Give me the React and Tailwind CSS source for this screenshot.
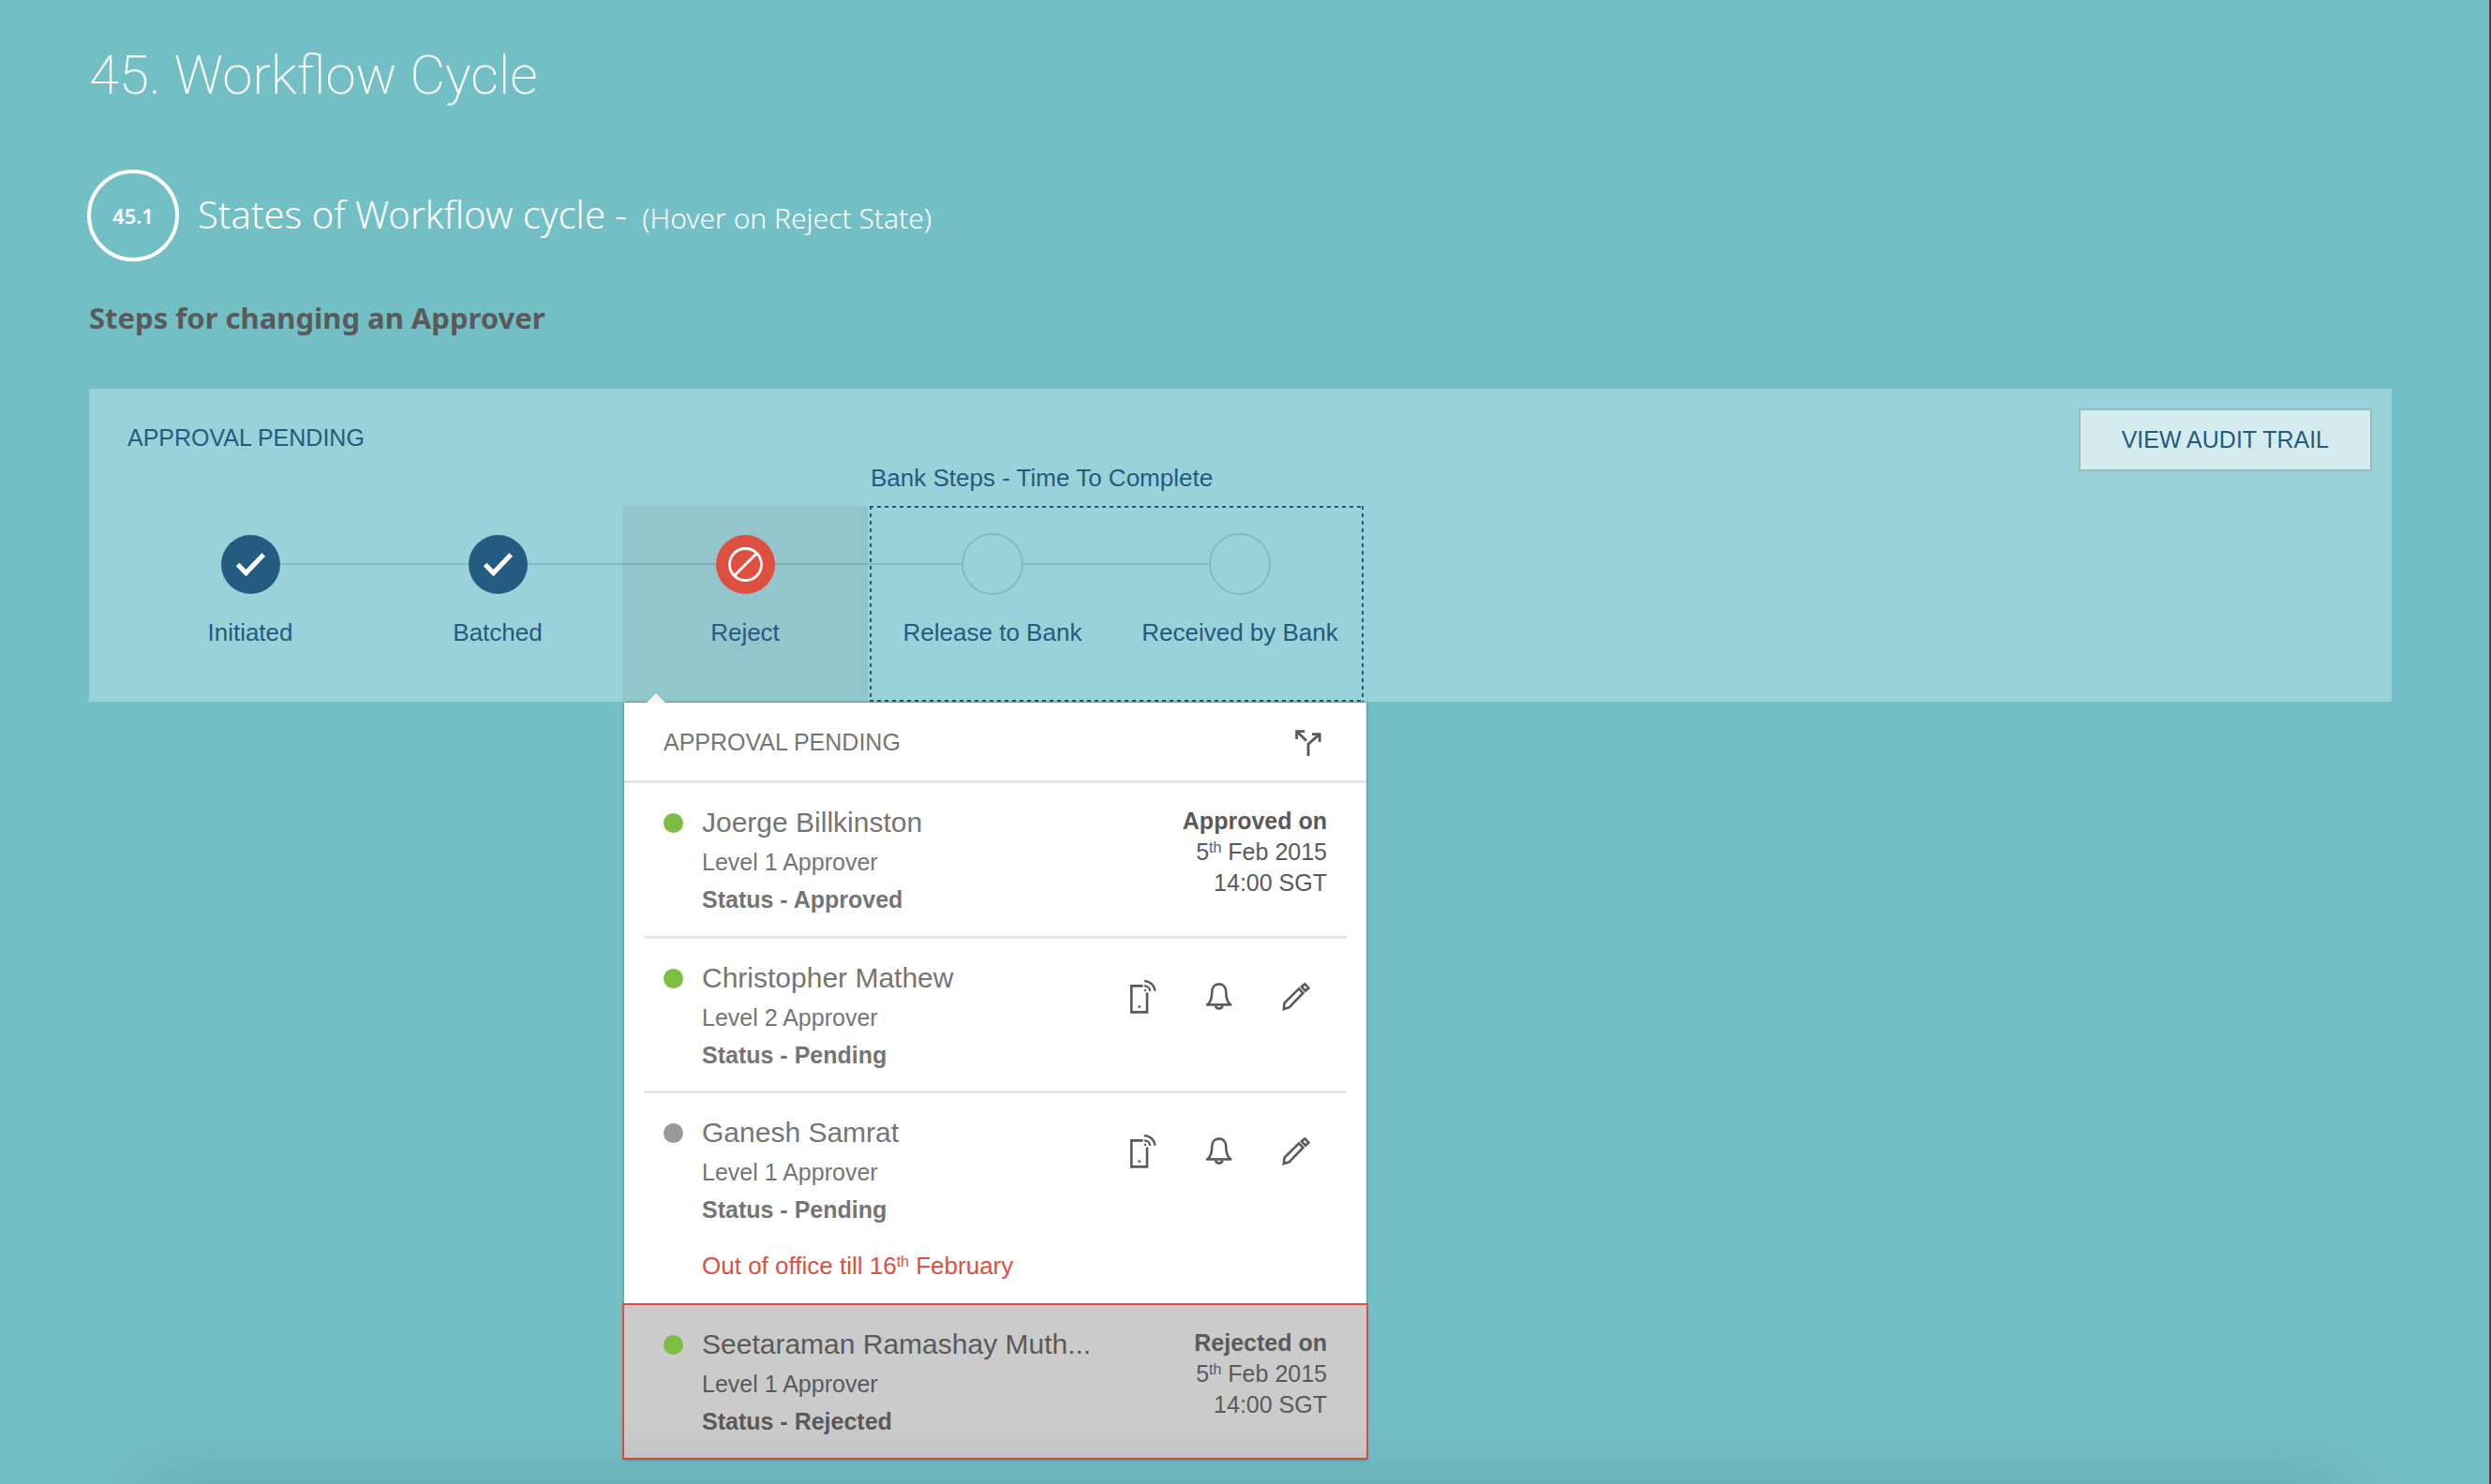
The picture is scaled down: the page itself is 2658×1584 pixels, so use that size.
function CheckIcon() {
  return (
    <svg viewBox="0 0 63 63" className="size-[63px] shrink-0" aria-hidden="true">
      <circle cx="31.5" cy="31.5" r="31.5" fill="#245b80" />
      <path d="M17.6 31.6 26.5 40.6 45.2 21" fill="none" stroke="#fff" strokeWidth="5" />
    </svg>
  );
}

function RejectIcon() {
  return (
    <svg viewBox="0 0 63 63" className="size-[63px] shrink-0" aria-hidden="true">
      <circle cx="31.5" cy="31.5" r="31.5" fill="#dd4f3f" />
      <circle cx="31.5" cy="31.5" r="17" fill="none" stroke="#fff" strokeWidth="2.8" />
      <path d="M19.5 43.5 43.5 19.5" stroke="#fff" strokeWidth="2.8" />
    </svg>
  );
}

function SplitIcon() {
  return (
    <svg viewBox="0 0 28 28" className="size-7" fill="none" stroke="#5a5a5a" strokeWidth="2.8" aria-hidden="true">
      <path d="M10.3 1.6H1.6V10M1.6 1.6 12 11.8M18 4.6h8.2v8.4M26.2 4.6 14 15.2V28" />
    </svg>
  );
}

function PhoneIcon() {
  return (
    <svg viewBox="0 0 64 44" className="h-11 w-16" fill="none" stroke="#5a5a5a" strokeWidth="2.6" aria-hidden="true">
      <path d="M31.6 10.4H19.3V38.4H36V17.4" />
      <path d="M33 5.2A11.5 11 0 0 1 44.4 15.8M33 10.4A6.2 6 0 0 1 39.2 15.8" strokeWidth="2.3" />
      <circle cx="34" cy="15" r="1.2" fill="#5a5a5a" stroke="none" />
      <circle cx="27.7" cy="32.7" r="1.4" fill="#5a5a5a" stroke="none" />
    </svg>
  );
}

function BellIcon() {
  return (
    <svg viewBox="0 0 64 44" className="h-11 w-16" fill="none" stroke="#5a5a5a" strokeWidth="2.6" aria-hidden="true">
      <path d="M19 30C22 27 23.2 23 23.2 17 23.2 11.5 26.5 8.4 30.7 8.4S38.2 11.5 38.2 17C38.2 23 39.5 27 42.4 30" />
      <path d="M17 30.4H44.4" />
      <path d="M27 31.4A3.8 3.8 0 0 0 34.5 31.4" />
    </svg>
  );
}

function PencilIcon() {
  return (
    <svg viewBox="0 0 64 44" className="h-11 w-16" fill="none" stroke="#5a5a5a" strokeWidth="2.6" aria-hidden="true">
      <path d="M17.8 35.2 18.6 28.6 34 13.4 38.4 18 23.8 33.2Z" />
      <path d="M36.8 11.2 40.3 8.2 44.3 12.7 41 15.6Z" />
    </svg>
  );
}

function Step({ label, state, first, last }) {
  return (
    <li className={state === "rejected"
      ? "flex w-[264px] flex-col items-center bg-[linear-gradient(#92c6cc,#92c6cc)] bg-[length:262px_100%] bg-center bg-no-repeat pt-[29px] pb-[58px]"
      : "flex w-[264px] flex-col items-center pt-[29px] pb-[58px]"}>
      <div className="flex h-[66px] w-full items-center">
        <span className={first ? "h-[2px] flex-1" : "h-[2px] flex-1 bg-black/12"} />
        {state === "done" && <CheckIcon />}
        {state === "rejected" && <RejectIcon />}
        {state === "idle" && <span className="size-[66px] shrink-0 rounded-full border-2 border-black/12" />}
        <span className={last ? "h-[2px] flex-1" : "h-[2px] flex-1 bg-black/12"} />
      </div>
      <span className="mt-6 text-[26px] leading-8">{label}</span>
    </li>
  );
}

function Sup() {
  return <sup className="static align-[8px] text-[16px] leading-none">th</sup>;
}

function Decision({ verdict }) {
  return (
    <div className="mt-1 text-right text-[25px] leading-[33px] text-[#5a5a5a]">
      <p className="font-bold">{verdict} on</p>
      <p>5<Sup /> Feb 2015</p>
      <p>14:00 SGT</p>
    </div>
  );
}

function Actions({ name }) {
  return (
    <div className="mt-5 flex gap-[18px]">
      <button type="button" aria-label={`Call ${name}`}><PhoneIcon /></button>
      <button type="button" aria-label={`Remind ${name}`}><BellIcon /></button>
      <button type="button" aria-label={`Change ${name}`}><PencilIcon /></button>
    </div>
  );
}

function Person({ name, level, status, online = true, children }) {
  return (
    <div className="flex gap-5">
      <div className="flex h-11 items-center">
        <span className={online ? "size-[21px] rounded-full bg-[#7fbc42]" : "size-[21px] rounded-full bg-[#999999]"} />
      </div>
      <div className="text-[25px] leading-10">
        <h3 className="text-[30px] leading-11">{name}</h3>
        <p>Level {level} Approver</p>
        <p className="font-bold">Status - {status}</p>
        {children}
      </div>
    </div>
  );
}

export default function App() {
  return (
    <main className="relative min-h-screen overflow-hidden border-r-2 border-[#404346] bg-[#73bfc6] pt-12 pr-[104px] pb-[25px] pl-[95px] font-['Liberation_Sans',Arial,sans-serif]">
      <h1 className="font-['Roboto',sans-serif] text-[58px] leading-16 font-extralight text-white">45. Workflow Cycle</h1>

      <div className="mt-[69px] -ml-[2px] flex items-center gap-5 font-['Noto_Sans',sans-serif] text-white">
        <span className="flex size-[98px] items-center justify-center rounded-full border-4 text-[22px] font-semibold">45.1</span>
        <h2 className="flex items-baseline gap-4 pb-[2px] text-[40px] font-light">
          States of Workflow cycle - <span className="text-[30px]">(Hover on Reject State)</span>
        </h2>
      </div>

      <p className="mt-10 font-['Noto_Sans',sans-serif] text-[31px] leading-10 font-bold text-[#5a5a5a]">Steps for changing an Approver</p>

      <section className="mt-14 flex items-start justify-between bg-[#9ad2da] text-[#245b80]">
        <div>
          <h2 className="pt-9 pl-[41px] text-[25px] leading-8">APPROVAL PENDING</h2>
          <div className="mt-[11px] ml-10 flex items-end">
            <ol className="flex">
              <Step label="Initiated" state="done" first />
              <Step label="Batched" state="done" />
              <Step label="Reject" state="rejected" />
            </ol>
            <div>
              <h3 className="mb-[14px] pl-[2px] text-[26px] leading-8">Bank Steps - Time To Complete</h3>
              <ol className="flex bg-no-repeat [background-image:repeating-linear-gradient(90deg,#245b80_0_4px,transparent_4px_8px),repeating-linear-gradient(90deg,#245b80_0_4px,transparent_4px_8px),repeating-linear-gradient(#245b80_0_4px,transparent_4px_8px),repeating-linear-gradient(#245b80_0_4px,transparent_4px_8px)] [background-position:1px_0,1px_100%,1px_0,100%_0] [background-size:100%_2px,100%_2px,2px_100%,2px_100%]">
                <Step label="Release to Bank" state="idle" />
                <Step label="Received by Bank" state="idle" last />
              </ol>
            </div>
          </div>
        </div>
        <button type="button" className="mt-[21px] mr-[21px] h-[67px] border-2 border-[#8dc0c5] bg-[#d4ecee] px-11 text-[25px]">VIEW AUDIT TRAIL</button>
      </section>

      <section className="relative mt-px ml-[571px] w-[792px] bg-white text-[#757575] shadow-[0_0_3px_rgba(0,60,70,0.5)]">
        <svg viewBox="0 0 20 10" className="absolute -top-[10px] left-6 h-[10px] w-5" aria-hidden="true">
          <path d="M0 10 10 0 20 10Z" fill="#f2f2f2" />
        </svg>
        <header className="flex h-[86px] items-center justify-between border-b-3 border-[#e5e5e5] pt-[2px] pr-12 pl-[42px]">
          <h2 className="text-[25px]">APPROVAL PENDING</h2>
          <button type="button" aria-label="Split approval"><SplitIcon /></button>
        </header>
        <ul>
          <li className="mx-[21px] flex justify-between border-b-3 border-[#e5e5e5] px-[21px] pt-5 pb-[19px]">
            <Person name="Joerge Billkinston" level={1} status="Approved" />
            <Decision verdict="Approved" />
          </li>
          <li className="mx-[21px] flex items-start justify-between border-b-3 border-[#e5e5e5] px-[21px] pt-5 pb-[18px]">
            <Person name="Christopher Mathew" level={2} status="Pending" />
            <Actions name="Christopher Mathew" />
          </li>
          <li className="mx-[21px] flex items-start justify-between px-[21px] pt-5 pb-5">
            <Person name="Ganesh Samrat" level={1} status="Pending" online={false}>
              <p className="mt-5 text-[26px] text-[#dd4f3f]">Out of office till 16<Sup /> February</p>
            </Person>
            <Actions name="Ganesh Samrat" />
          </li>
          <li className="-mx-[2px] flex justify-between border-2 border-[#dd4f3f] bg-[#cbcbcb] px-[42px] pt-5 pb-[19px] text-[#5a5a5a]">
            <Person name="Seetaraman Ramashay Muth..." level={1} status="Rejected" />
            <Decision verdict="Rejected" />
          </li>
        </ul>
      </section>

      <div className="pointer-events-none absolute inset-x-[150px] -bottom-10 h-10 rounded-full shadow-[0_0_70px_rgba(0,0,0,0.18)]" />
    </main>
  );
}
